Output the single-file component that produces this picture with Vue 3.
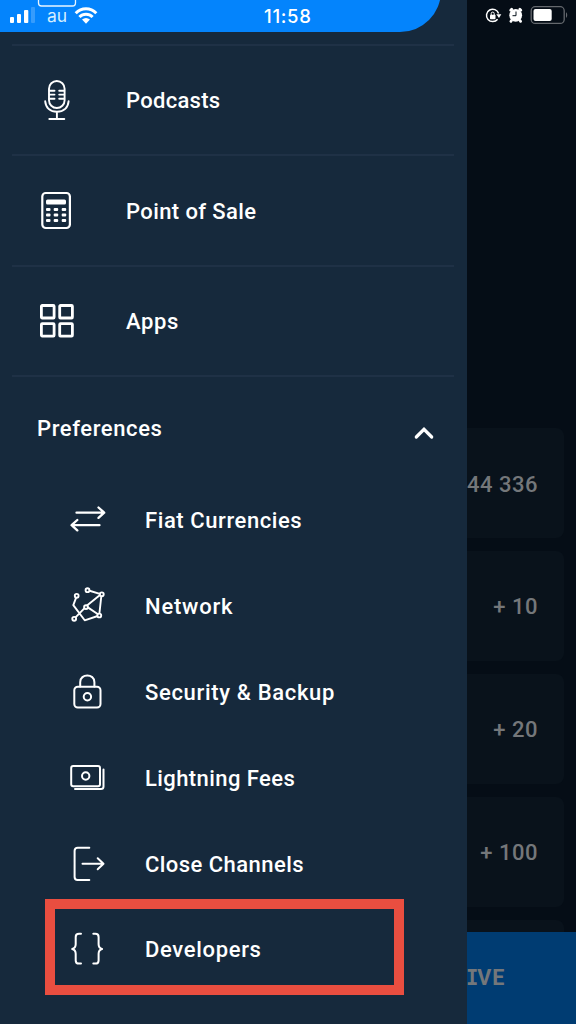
<script setup>
const mainItems = [
  { id: 'podcasts', label: 'Podcasts', tracking: 0.3 },
  { id: 'pos', label: 'Point of Sale', tracking: 0.4 },
  { id: 'apps', label: 'Apps', tracking: 0.6 },
]
const preferences = [
  { id: 'fiat', label: 'Fiat Currencies', tracking: 0.58 },
  { id: 'network', label: 'Network', tracking: 0.8 },
  { id: 'security', label: 'Security & Backup', tracking: 0.67 },
  { id: 'fees', label: 'Lightning Fees', tracking: 0.42 },
  { id: 'close', label: 'Close Channels', tracking: 0.45 },
  { id: 'developers', label: 'Developers', tracking: 0.67 },
]
const amounts = ['44 336', '+ 10', '+ 20', '+ 100', '']
</script>

<template>
  <div class="screen">
    <aside class="drawer">
      <header class="call-bar">
        <svg class="carrier-icons" width="100" height="32" viewBox="0 0 100 32">
          <rect x="38.5" y="-8" width="37" height="14" rx="3" fill="none" stroke="#e8f5ff" stroke-width="1.3" />
          <g fill="#fff">
            <rect x="10" y="17" width="4" height="6" rx="1" />
            <rect x="17" y="14" width="4" height="9" rx="1" />
            <rect x="24" y="10" width="4.3" height="13" rx="1" />
            <rect x="31" y="7" width="4" height="16" rx="1" opacity=".2" />
          </g>
          <g fill="none" stroke="#fff" stroke-width="3">
            <path d="M75.7 13.2C81.5 7.4 90.5 7.4 96.3 13.2" />
            <path d="M79.4 17C83.2 13.2 88.8 13.2 92.6 17" />
          </g>
          <path d="M82 19.6Q86 16.6 90 19.6L86 23.8Z" fill="#fff" />
        </svg>
        <span class="carrier">au</span>
        <span class="time">11:58</span>
      </header>

      <nav class="menu">
        <div v-for="item in mainItems" :key="item.id" class="menu-row">
          <svg v-if="item.id === 'podcasts'" class="icon" width="40" height="44" viewBox="0 0 40 44" fill="none" stroke="#fff" stroke-width="1.9" stroke-linecap="round">
            <rect x="12" y="3" width="15.6" height="27" rx="7.8" />
            <path d="M12.5 12.8h5M12.5 16.6h5M12.5 20.7h5M22.2 12.8h5M22.2 16.6h5M22.2 20.7h5M8.2 23.3c.6 6.5 5.2 10.5 11.7 10.5s11.1-4 11.7-10.5M19.9 34v6.6M12.3 41h15" />
          </svg>
          <svg v-else-if="item.id === 'pos'" class="icon" width="40" height="44" viewBox="0 0 40 44">
            <rect x="5.3" y="5" width="27.6" height="35" rx="3.5" fill="none" stroke="#fff" stroke-width="2.2" />
            <g fill="#fff">
              <rect x="9" y="11.5" width="20" height="5" rx="1.5" />
              <template v-for="y in [20, 25.5, 31]" :key="y">
                <rect v-for="x in [9, 16.7, 24.7]" :key="x" :x="x" :y="y" width="4.5" height="3" rx="1" />
              </template>
            </g>
          </svg>
          <svg v-else class="icon" width="40" height="44" viewBox="0 -.3 40 44" fill="none" stroke="#fff" stroke-width="2.8">
            <rect x="4.4" y="6.2" width="12.7" height="12.5" rx=".8" />
            <rect x="22.7" y="6.2" width="12.7" height="12.5" rx=".8" />
            <rect x="4.4" y="24.3" width="12.7" height="12.5" rx=".8" />
            <rect x="22.7" y="24.3" width="12.7" height="12.5" rx=".8" />
          </svg>
          <span class="label" :style="{ letterSpacing: item.tracking + 'px' }">{{ item.label }}</span>
        </div>
      </nav>

      <div class="section-head">
        <span class="label">Preferences</span>
        <svg width="20" height="14" viewBox="0 0 20 14" fill="none" stroke="#fff" stroke-width="3.2" stroke-linecap="round" stroke-linejoin="miter">
          <path d="M2.3 11L10 3.3L17.7 11" />
        </svg>
      </div>

      <nav class="sub-menu">
        <div v-for="item in preferences" :key="item.id" class="sub-row" :class="{ marked: item.id === 'developers' }">
          <svg class="icon" width="40" height="40" viewBox="0 0 40 40" fill="none" stroke="#fff" stroke-width="2" stroke-linecap="round" stroke-linejoin="round">
            <g v-if="item.id === 'fiat'" stroke-width="2.3">
              <path d="M7.5 12.7h27.5M29.5 7.5l5.7 5.2-5.7 5.2M30.5 25.2H3M8.3 20l-5.7 5.2 5.7 5.2" />
            </g>
            <g v-else-if="item.id === 'network'" stroke-width="1.9" transform="translate(.5 .3)">
              <path d="M6.8 10.8L3.800 18.8L15.2 34L29.7 29.2L32 8L19.2 4.2M30.5 8.7L17.5 19.3L5.3 31.8M18.7 21.3L28.5 28" />
              <g fill="#17293d">
                <circle cx="7.2" cy="9.5" r="1.9" />
                <circle cx="18" cy="3.9" r="1.9" />
                <circle cx="32.3" cy="8" r="1.9" />
                <circle cx="16.5" cy="20.8" r="1.9" />
                <circle cx="29.8" cy="29.2" r="1.9" />
                <circle cx="4.7" cy="32.5" r="1.9" />
              </g>
            </g>
            <g v-else-if="item.id === 'security'">
              <rect x="5.3" y="14.7" width="26.2" height="20.8" rx="3.5" />
              <path d="M11.2 14.5V10.2c0-9 14.2-9 14.2 0v4.3" />
              <circle cx="18.4" cy="24.8" r="3.7" />
            </g>
            <g v-else-if="item.id === 'fees'">
              <rect x="2.2" y="8" width="28.8" height="20.2" rx="2" />
              <circle cx="16.7" cy="18" r="3.7" />
              <path d="M34.5 11.5V28.5a2.6 2.6 0 0 1-2.6 2.6H6" />
            </g>
            <g v-else-if="item.id === 'close'">
              <path d="M20.3 3.7H8.6a3 3 0 0 0-3 3v26.2a3 3 0 0 0 3 3H20.3M13.5 19.8h20.8M28.7 14.3l5.8 5.5-5.8 5.5" />
            </g>
            <g v-else>
              <path d="M12 4.7H10c-2.300 0-3.300 1-3.300 3.200v7.400c0 2-1 4-3.500 4.700 2.500.7 3.500 2.700 3.500 4.700v6.700c0 2.200 1 3.200 3.300 3.200h2M24.300 4.700h2c2.300 0 3.300 1 3.300 3.200v7.400c0 2 1 4 3.500 4.700-2.500.7-3.500 2.700-3.500 4.700v6.700c0 2.200-1 3.200-3.300 3.200h-2" />
            </g>
          </svg>
          <span class="label" :style="{ letterSpacing: item.tracking + 'px' }">{{ item.label }}</span>
        </div>
      </nav>
    </aside>

    <main class="backdrop">
      <div class="system-icons">
        <svg width="109" height="32" viewBox="467 0 109 32" fill="none">
          <path d="M497.6 19.200A6.200 6.200 0 1 1 498.600 13.500" stroke="#fff" stroke-width="1.5" />
          <path d="M496.300 14.200h5l-2.300 3.700z" fill="#fff" />
          <rect x="490" y="14.700" width="5.500" height="4.500" rx=".7" fill="#fff" />
          <path d="M491.200 15v-1.400a1.500 1.500 0 0 1 3 0V15" stroke="#fff" />
          <circle cx="515.700" cy="15.300" r="6.400" fill="#fff" />
          <path d="M510.700 10.300l1-1M520.800 10.300l-1-1M511.500 20.500l-.6.8M520 20.500l.6.8" stroke="#fff" stroke-width="2.800" stroke-linecap="round" />
          <path d="M516 11.500V15.700H512.500" stroke="#06101a" />
          <rect x="531.200" y="6.700" width="33" height="16.700" rx="4" stroke="#65696e" stroke-width="1.300" />
          <rect x="533.500" y="9" width="18.200" height="12" rx="2" fill="#fff" />
          <path d="M566 12.200c1.600.8 1.600 4.800 0 5.600z" fill="#65696e" />
        </svg>
      </div>
      <div class="amounts">
        <div v-for="(amount, i) in amounts" :key="i" class="amount-card">{{ amount }}</div>
      </div>
      <div class="receive"><span class="slab">I</span>VE</div>
    </main>
  </div>
</template>

<style>
body {
  margin: 0;
  background: #050d16;
}
</style>

<style scoped>
.screen {
  display: grid;
  grid-template-columns: 467px 109px;
  width: 576px;
  height: 1024px;
  overflow: hidden;
  background: #050d16;
  color: #fff;
  font-family: Roboto, "Noto Sans", sans-serif;
}
.screen svg {
  display: block;
  flex: none;
}
.drawer {
  height: 1024px;
  overflow: hidden;
  background: #16293c;
}
.call-bar {
  display: flex;
  align-items: flex-start;
  box-sizing: border-box;
  width: 441px;
  height: 72px;
  margin-top: -40px;
  padding-top: 40px;
  border-radius: 0 0 41px 0;
  background: #0484fc;
}
.carrier {
  width: 30px;
  margin: 5px 0 0 -53px;
  font: 400 17.5px/22px Inter, sans-serif;
  color: #d5eeff;
}
.time {
  margin: 5px 0 0 187px;
  font: 500 18.5px/22px Inter, sans-serif;
  letter-spacing: 0.7px;
}
.menu {
  margin: 11.5px 13px 0 12px;
  border-top: 2px solid #1f3146;
}
.menu-row {
  display: flex;
  align-items: center;
  box-sizing: border-box;
  height: 110.6px;
  padding-left: 25px;
  border-bottom: 2px solid #1f3146;
}
.menu-row .label {
  margin: 3px 0 0 49px;
}
.label {
  font-size: 22px;
  font-weight: 500;
  line-height: 30px;
  letter-spacing: 0.6px;
  white-space: nowrap;
}
.section-head {
  display: flex;
  align-items: center;
  justify-content: space-between;
  height: 100px;
  padding: 0 33px 0 37px;
}
.section-head .label {
  margin-top: 3px;
}
.section-head svg {
  margin-top: 12px;
}
.sub-menu {
  display: flex;
  flex-direction: column;
}
.sub-row {
  display: flex;
  align-items: center;
  box-sizing: border-box;
  height: 86px;
  padding-left: 69px;
}
.sub-row .icon {
  margin-top: -1.4px;
}
.sub-row .label {
  margin: 1px 0 0 36px;
}
.sub-row.marked {
  width: 359px;
  height: 96px;
  margin: -8px 0 0 45px;
  padding-left: 14px;
  border: 10px solid #e94e40;
}
.sub-row.marked .icon {
  margin-top: 3px;
}
.sub-row.marked .label {
  margin-top: 6px;
}
.backdrop {
  display: flex;
  flex-direction: column;
  height: 1024px;
  overflow: hidden;
  color: #74777a;
}
.system-icons {
  flex: none;
  height: 428px;
}
.amounts {
  display: flex;
  flex-direction: column;
  gap: 12.7px;
  height: 504px;
  overflow: hidden;
}
.amount-card {
  display: flex;
  flex: none;
  align-items: center;
  justify-content: flex-end;
  box-sizing: border-box;
  width: 97px;
  height: 110.2px;
  padding: 2px 26px 0 0;
  border-radius: 0 8px 8px 0;
  background: #09121b;
  font-size: 22px;
  font-weight: 500;
  letter-spacing: 0.5px;
  white-space: nowrap;
}
.receive {
  height: 92px;
  background: #003c72;
  font-size: 21.5px;
  font-weight: 700;
  line-height: 92px;
  letter-spacing: 0.8px;
}
.slab {
  margin: 0 -1px;
  font-family: "DejaVu Sans Mono", monospace;
  font-size: 20.5px;
  letter-spacing: 0;
}
</style>
